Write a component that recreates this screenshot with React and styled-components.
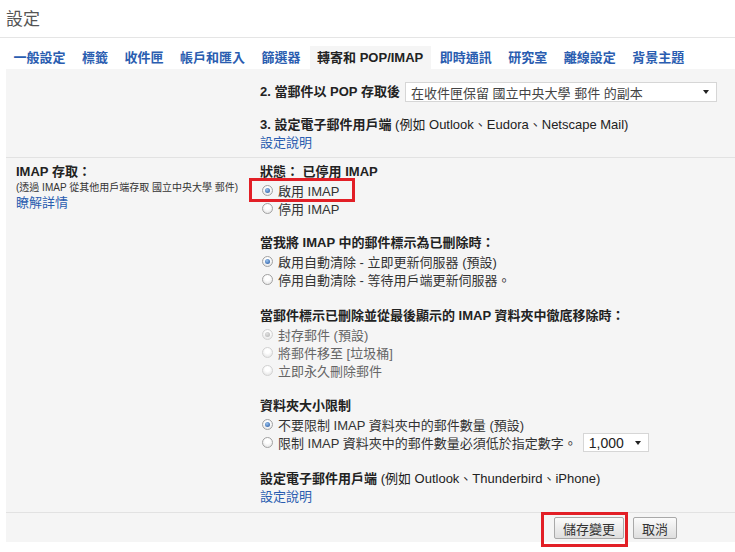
import styled, { createGlobalStyle, css } from "styled-components";

const GlobalStyle = createGlobalStyle`
  body {
    margin: 0;
    background: #fff;
    color: #222;
    font-family: "Liberation Sans", "Noto Sans CJK TC", sans-serif;
  }
`;

const Page = styled.div`
  width: 735px;
  height: 552px;
  overflow: hidden;
`;

const Header = styled.header`
  height: 38px;
  box-sizing: border-box;
  padding: 0 0 3px 6px;
  display: flex;
  align-items: center;
  border-bottom: 1px solid #e5e5e5;
  font-size: 17px;
  color: #555;
`;

const Tabs = styled.nav`
  display: flex;
  margin: 8px 0 0 6px;
`;

const Tab = styled.span`
  height: 23px;
  line-height: 23px;
  padding: 0 7.5px;
  margin-right: 1.5px;
  font-size: 13px;
  font-weight: bold;
  white-space: nowrap;
  color: ${(p) => (p.$active ? "#222" : "#2a5db0")};
  background: ${(p) => (p.$active ? "#f5f5f5" : "transparent")};
`;

const Panel = styled.main`
  margin-left: 6px;
  background: #f5f5f5;
  font-size: 13px;
`;

const Section = styled.section`
  display: grid;
  grid-template-columns: 254px 1fr;
  padding: ${(p) => p.$pad || "0"};
  border-bottom: 1px solid #e2e2e2;
`;

const Label = styled.div`
  padding-left: 10px;
`;

const Strong = styled.div`
  font-weight: bold;
  line-height: 18px;
`;

const Hint = styled.div`
  font-size: 10px;
  line-height: 13px;
  color: #333;
  white-space: nowrap;
`;

const Link = styled.a`
  display: block;
  line-height: 18px;
  color: #2a5db0;
  margin-top: ${(p) => p.$mt || 0}px;
`;

const Group = styled.div`
  margin-top: ${(p) => p.$mt || 0}px;
`;

const Line = styled.div`
  display: flex;
  align-items: center;
  height: ${(p) => p.$h || 18}px;
  margin-top: ${(p) => p.$mt || 0}px;
  white-space: nowrap;
`;

const Normal = styled.span`
  font-weight: normal;
`;

const RadioRow = styled.label`
  position: relative;
  display: flex;
  align-items: center;
  height: ${(p) => p.$h || 18}px;
  white-space: nowrap;
  color: ${(p) => (p.$disabled ? "#666" : "#333")};

  ${(p) =>
    p.$marked &&
    css`
      &::before {
        content: "";
        position: absolute;
        top: -3px;
        bottom: -3px;
        left: -11px;
        width: 106px;
        border: 3px solid #e21f26;
        box-sizing: border-box;
      }
    `}
`;

const Radio = styled.span`
  position: relative;
  flex-shrink: 0;
  width: 11px;
  height: 11px;
  box-sizing: border-box;
  margin: 0 5px 0 2px;
  border-radius: 50%;
  border: 1px solid ${(p) => (p.$disabled ? "#d2d2d2" : "#a2a2a2")};
  background: radial-gradient(circle at 50% 35%, #fff 30%, #dedede);

  ${(p) =>
    p.$checked &&
    css`
      &::after {
        content: "";
        position: absolute;
        inset: 2px;
        border-radius: 50%;
        background: ${p.$disabled
          ? "radial-gradient(circle at 40% 35%, #e2e2e2, #b0b0b0)"
          : "radial-gradient(circle at 40% 35%, #9cc4ee, #1b4f9c)"};
      }
    `}
`;

const Select = styled.div`
  display: inline-flex;
  align-items: center;
  justify-content: space-between;
  box-sizing: border-box;
  width: ${(p) => p.$width}px;
  height: ${(p) => p.$height || 20}px;
  margin-left: ${(p) => p.$ml || 5}px;
  padding: 0 7px 0 5px;
  background: #fff;
  border: 1px solid #d6d6d6;
  font-size: ${(p) => p.$size || 13}px;
  color: ${(p) => p.$color || "#444"};
`;

const Caret = styled.span`
  width: 0;
  height: 0;
  border-left: 3.5px solid transparent;
  border-right: 3.5px solid transparent;
  border-top: 4px solid #222;
`;

const Footer = styled.footer`
  display: flex;
  justify-content: flex-end;
  gap: 9px;
  padding: 4px 58px 3px 0;
`;

const ButtonWrap = styled.div`
  position: relative;

  ${(p) =>
    p.$marked &&
    css`
      &::before {
        content: "";
        position: absolute;
        top: -5px;
        bottom: -8px;
        left: -13px;
        right: -4px;
        border: 3px solid #e21f26;
      }
    `}
`;

const Button = styled.button`
  height: 22px;
  padding: 0 8px;
  font-family: inherit;
  font-size: 13px;
  color: #333;
  border: 1px solid #a9a9a9;
  border-radius: 2px;
  background: linear-gradient(#fbfbfb, #dedede);
`;

const tabs = ["一般設定", "標籤", "收件匣", "帳戶和匯入", "篩選器", "轉寄和 POP/IMAP", "即時通訊", "研究室", "離線設定", "背景主題"];

const Option = ({ checked, disabled, marked, children }) => (
  <RadioRow $disabled={disabled} $marked={marked}>
    <Radio $checked={checked} $disabled={disabled} />
    {children}
  </RadioRow>
);

const App = () => {
  return (
    <Page>
      <GlobalStyle />
      <Header>設定</Header>
      <Tabs>
        {tabs.map((t) => (
          <Tab key={t} $active={t === "轉寄和 POP/IMAP"}>
            {t}
          </Tab>
        ))}
      </Tabs>
      <Panel>
        <Section $pad="13px 0 5px 0">
          <div />
          <div>
            <Line $h={20}>
              <Strong>2. 當郵件以 POP 存取後</Strong>
              <Select $width={312}>
                在收件匣保留 國立中央大學 郵件 的副本
                <Caret />
              </Select>
            </Line>
            <Line $mt={14}>
              <Strong>
                3. 設定電子郵件用戶端 <Normal>(例如 Outlook、Eudora、Netscape Mail)</Normal>
              </Strong>
            </Line>
            <Link>設定說明</Link>
          </div>
        </Section>

        <Section $pad="5px 0 6px 0">
          <Label>
            <Strong>IMAP 存取：</Strong>
            <Hint>(透過 IMAP 從其他用戶端存取 國立中央大學 郵件)</Hint>
            <Link>瞭解詳情</Link>
          </Label>
          <div>
            <Group>
              <Strong>狀態： 已停用 IMAP</Strong>
              <Option checked marked>啟用 IMAP</Option>
              <Option>停用 IMAP</Option>
            </Group>
            <Group $mt={17}>
              <Strong>當我將 IMAP 中的郵件標示為已刪除時：</Strong>
              <Option checked>啟用自動清除 - 立即更新伺服器 (預設)</Option>
              <Option>停用自動清除 - 等待用戶端更新伺服器。</Option>
            </Group>
            <Group $mt={19}>
              <Strong>當郵件標示已刪除並從最後顯示的 IMAP 資料夾中徹底移除時：</Strong>
              <Option checked disabled>封存郵件 (預設)</Option>
              <Option disabled>將郵件移至 [垃圾桶]</Option>
              <Option disabled>立即永久刪除郵件</Option>
            </Group>
            <Group $mt={18}>
              <Strong>資料夾大小限制</Strong>
              <Option checked>不要限制 IMAP 資料夾中的郵件數量 (預設)</Option>
              <RadioRow $h={19}>
                <Radio />
                限制 IMAP 資料夾中的郵件數量必須低於指定數字。
                <Select $width={66} $height={19} $ml={6} $size={14} $color="#222">
                  1,000
                  <Caret />
                </Select>
              </RadioRow>
            </Group>
            <Group $mt={18}>
              <Strong>
                設定電子郵件用戶端 <Normal>(例如 Outlook、Thunderbird、iPhone)</Normal>
              </Strong>
              <Link>設定說明</Link>
            </Group>
          </div>
        </Section>

        <Footer>
          <ButtonWrap $marked>
            <Button>儲存變更</Button>
          </ButtonWrap>
          <ButtonWrap>
            <Button>取消</Button>
          </ButtonWrap>
        </Footer>
      </Panel>
    </Page>
  );
};

export default App;
